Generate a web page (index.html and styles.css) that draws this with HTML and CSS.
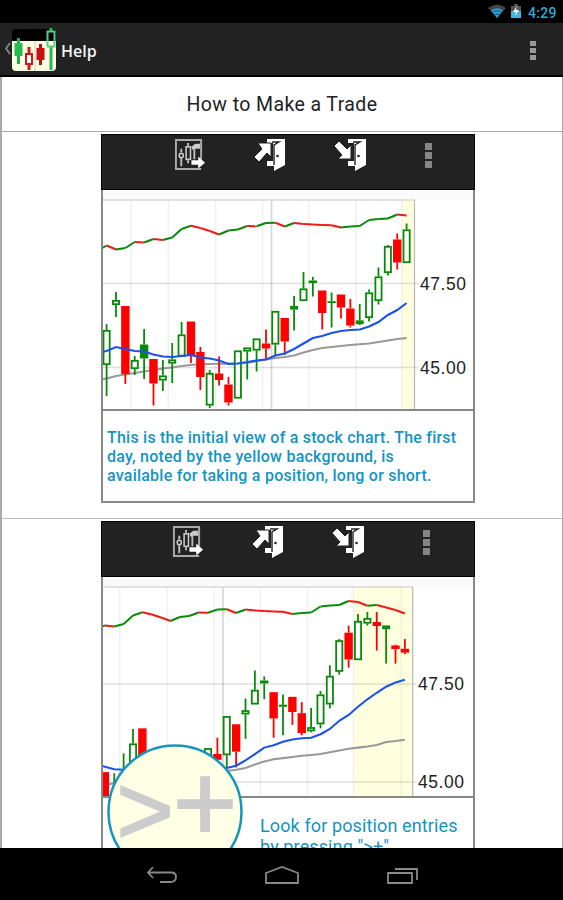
FILE: index.html
```html
<!DOCTYPE html>
<html lang="en">

<head>
    <meta charset="UTF-8">
    <meta name="viewport" content="width=device-width, initial-scale=1.0">
    <title>Help</title>
    <link rel="stylesheet" href="styles.css">
</head>

<body>
    <!-- shared icons -->
    <svg class="defs">
        <symbol id="icon-chart" viewBox="0 0 32 34">
            <path d="M28 22V2H2v30h26" fill="none" stroke="#aaa" stroke-width="2" />
            <path d="M7.500 11v4M7.500 20v9M14.500 5v3M14.500 23v3M21 11v11" stroke="#bbb" stroke-width="2" />
            <rect x="5.500" y="16" width="4" height="4" rx="1" fill="none" stroke="#ccc" stroke-width="1.600" />
            <rect x="12.500" y="9" width="4.500" height="13" fill="none" stroke="#ccc" stroke-width="1.600" />
            <path d="M18 9l4-3h5v5h-5l-3 1z" fill="#ccc" />
            <path d="M18 23h7v-4l7 6.500-7 6v-4h-7z" fill="#fff" />
        </symbol>
        <symbol id="icon-door" viewBox="0 0 20 34">
            <path d="M1 1h18v26L8 33V28H1v-5h6V5H1z" fill="#fff" />
            <path d="M6 4h7L8 7v20" fill="none" stroke="#222" stroke-width="1.400" />
            <circle cx="11.500" cy="18" r="1.300" fill="#222" />
        </symbol>
    </svg>

    <div class="status-bar">
        <svg class="wifi" width="20" height="16" viewBox="0 0 20 16">
            <path d="M1 4Q10-3 19 4L10 14z" fill="#444" />
            <path d="M4 6.500Q10 2 16 6.500L10 14z" fill="#2b9fc9" />
            <path d="M5 8.500Q10 5 15 8.500M7 11q3-2 6 0" fill="none" stroke="#126" stroke-width=".6" />
        </svg>
        <svg class="battery" width="10" height="16" viewBox="0 0 10 16">
            <path d="M3 1h4v2h3v12H0V3h3z" fill="#555" />
            <path d="M0 8h10v7H0z" fill="#45b5dd" />
            <path d="M6 3L2 9h3l-1 4 4-6H5z" fill="#fff" />
        </svg>
        <span class="time">4:29</span>
    </div>

    <div class="action-bar">
        <svg class="app-icon" width="53" height="46" viewBox="0 0 53 46">
            <path d="M6 16l-4 5.500L6 27" fill="none" stroke="#888" stroke-width="1.800" />
            <rect x="8" y="2" width="44" height="42" rx="4" fill="#000" />
            <path d="M8 14h44v26a4 4 0 0 1-4 4H12a4 4 0 0 1-4-4z" fill="#ffffe3" />
            <path d="M31 14v30" stroke="#ccc" />
            <path d="M14.500 11v26" stroke="#1bae48" stroke-width="3" />
            <rect x="10.500" y="16" width="8" height="13" fill="#22bd52" />
            <path d="M25 20v7M25 38v5" stroke="#cf1818" stroke-width="3" />
            <rect x="22" y="27" width="6" height="10" fill="#fff" stroke="#cf1818" stroke-width="2" />
            <path d="M36.500 17v21" stroke="#b81010" stroke-width="3" />
            <rect x="32.500" y="21" width="8" height="12" fill="#c81010" />
            <path d="M47 1v4M47 20v23" stroke="#25b856" stroke-width="3" />
            <rect x="43.500" y="4.500" width="7" height="15" fill="none" stroke="#54cf86" stroke-width="2" />
        </svg>
        <h1>Help</h1>
        <div class="overflow"><i></i><i></i><i></i></div>
    </div>

    <div class="list">
        <h2 class="list-title">How to Make a Trade</h2>

        <div class="list-row">
            <div class="card">
                <div class="toolbar">
                    <svg class="tool-chart" width="31" height="33"><use href="#icon-chart" /></svg>
                    <svg class="tool-door" width="34" height="34">
                        <use href="#icon-door" x="13" y="0" width="20" height="34" />
                        <path d="M5 5h13v14l-4-4-8 9-5-5 8-8z" fill="#fff" stroke="#222" />
                    </svg>
                    <svg class="tool-door" width="34" height="34">
                        <use href="#icon-door" x="13" y="0" width="20" height="34" />
                        <path d="M5 3l8 8 4-4v14H4l4-4-8-9z" fill="#fff" stroke="#222" />
                    </svg>
                    <div class="overflow small"><i></i><i></i><i></i></div>
                </div>
                <svg class="chart" id="chart1" width="370" height="219" viewBox="103 190 370 219"></svg>
                <p class="caption">This is the initial view of a stock chart. The first<br>day, noted by the yellow background, is<br>available for taking a position, long or short.</p>
            </div>
        </div>

        <div class="list-row">
            <div class="card second">
                <div class="toolbar">
                    <svg class="tool-chart" width="31" height="33"><use href="#icon-chart" /></svg>
                    <svg class="tool-door" width="34" height="34">
                        <use href="#icon-door" x="13" y="0" width="20" height="34" />
                        <path d="M5 5h13v14l-4-4-8 9-5-5 8-8z" fill="#fff" stroke="#222" />
                    </svg>
                    <svg class="tool-door" width="34" height="34">
                        <use href="#icon-door" x="13" y="0" width="20" height="34" />
                        <path d="M5 3l8 8 4-4v14H4l4-4-8-9z" fill="#fff" stroke="#222" />
                    </svg>
                    <div class="overflow small"><i></i><i></i><i></i></div>
                </div>
                <svg class="chart" id="chart2" width="370" height="219" viewBox="103 577 370 219"></svg>
                <p class="caption large">Look for position entries<br>by pressing "&gt;+"</p>
                <svg class="badge" width="136" height="136" viewBox="0 0 136 136">
                    <circle cx="68" cy="68" r="66.500" fill="#ffffe6" stroke="#1496bd" stroke-width="2.500" />
                    <text x="9.500" y="100" font-size="98">&gt;</text>
                    <text x="66" y="97" font-size="110">+</text>
                </svg>
            </div>
        </div>
    </div>

    <div class="nav-bar">
        <svg width="32" height="20" viewBox="0 0 32 20">
            <path d="M7 1L2 6.500 7 12M2 6.500h23q5 0 5 4.500t-5 5H14" />
        </svg>
        <svg width="36" height="20" viewBox="0 0 36 20">
            <path d="M2 17V7l16-6 16 6v10z" />
        </svg>
        <svg width="34" height="20" viewBox="0 0 34 20">
            <path d="M2 7h24v10H2zM9 3h22v11" />
        </svg>
    </div>

    <script>
        // type (h hollow, g green, r red), body top, body bottom, high, low
        const candles = [
            ['h', 330, 365, 324, 396], ['h', 300, 305, 292, 317], ['r', 306, 374, 306, 384],
            ['h', 360, 369, 356, 375], ['g', 344.5, 358.5, 329, 379], ['r', 359, 383.5, 359, 405.5],
            ['h', 375.5, 380.5, 360, 391], ['h', 359.5, 363.5, 343, 383], ['h', 334.5, 356.5, 322, 357],
            ['r', 321.5, 355, 321.5, 363], ['r', 352, 377, 347, 390], ['h', 373, 405.5, 370, 408],
            ['r', 373.5, 380, 356.5, 385.5], ['r', 384.5, 402.5, 377, 405.5], ['h', 350.5, 398.5, 350.5, 398.5],
            ['h', 347.5, 351.5, 347.5, 379.5], ['h', 338.5, 350.5, 338.5, 371.5], ['r', 343.5, 348.5, 329.5, 359],
            ['h', 311, 344.5, 311, 355], ['r', 318, 341.5, 318, 355], ['h', 306, 309.5, 296, 330.5],
            ['h', 288.5, 301, 272, 301], ['g', 280.5, 283, 277, 296.5], ['r', 290.5, 313, 290.5, 329.5],
            ['g', 301.2, 303, 292.5, 327.5], ['r', 294.5, 307.5, 294.5, 318.5], ['r', 308.5, 325.5, 299, 327.5],
            ['h', 320.5, 324, 304, 325], ['h', 292.5, 318, 289.5, 321.5], ['h', 276.5, 301, 267.5, 304.5],
            ['h', 246, 273, 245, 275.5], ['r', 239.5, 262.5, 233.5, 269.5], ['h', 229.5, 263, 223.5, 263],
            ['h', 227, 231.7, 221.8, 233.4], ['r', 230.4, 233.8, 221.8, 254.8], ['h', 233.4, 236.4, 233.4, 266],
            ['r', 250.5, 253.5, 249.7, 266], ['r', 253.3, 256.6, 245, 258]
        ];
        const trend = [245.5, 249.5, 248, 242, 242.5, 239, 240, 237.5, 229, 225.7, 228, 231, 234.5, 230.5, 229.5, 226, 226.3,
            223, 222.7, 226.5, 223, 224, 224.4, 225, 225.3, 227.5, 226.5, 226, 220, 219, 218.5, 214.5, 215.5, 219.2, 218.5, 221, 223.5, 227];
        const fast = [351, 347, 349, 351, 351.5, 354.5, 356.5, 357, 356, 355, 357.5, 358.5, 360.5, 364, 363.5, 362, 360.5,
            359.5, 355.5, 353.5, 349, 343.5, 338, 336, 333, 331, 330, 329.5, 326.5, 322, 315, 310, 303, 296.6, 291, 285.8, 282.2, 279.8];
        const slow = [378.5, 376, 374.5, 373, 371.5, 370, 368.5, 367.5, 366, 365, 364.3, 364, 363.7, 363.6, 363.5, 363, 361,
            359.5, 358, 357, 355.5, 352.5, 350, 348, 347, 346, 345, 344.3, 343.5, 342, 340.5, 339, 338, 337, 335.8, 333.2, 332.3, 331.2];

        function drawChart(id, o) {
            const px = i => 106.6 + i * 9.375 + o.dx;
            const py = y => o.mid + (y - 283.5) * o.scale;
            const line = (x1, y1, x2, y2, color, w, opacity = 1) =>
                `<line x1="${x1}" y1="${y1}" x2="${x2}" y2="${y2}" stroke="${color}" stroke-width="${w}" opacity="${opacity}"/>`;
            const path = (list, color) => '<polyline fill="none" stroke="' + color + '" stroke-width="2.1" points="' +
                [list[0] + 1.5].concat(list).slice(0, o.count + 1).map((y, i) => px(i - 1) + ',' + py(y)).join(' ') + '"/>';
            let s = `<rect x="103" y="${o.top - 9}" width="370" height="9" fill="#fafafa"/>`;
            s += `<rect x="${o.yellow}" y="${o.top}" width="${o.right - o.yellow}" height="230" fill="#ffffe0"/>`;

            // grid
            [130.7, 168.3, 215.7, 262.5, 309, 356, 402, 449.7].forEach(x => {
                if (x + o.dx < o.right) s += line(x + o.dx, o.top, x + o.dx, o.top + 230, '#000', 1.3, 0.06);
            });
            s += line(271.5 + o.dx, o.top, 271.5 + o.dx, o.top + 230, '#d8d8d8', 1.8);
            s += line(103, o.top, o.right, o.top, '#d8d8d8', 1.3);
            s += line(103, o.mid, o.right + 4, o.mid, '#000', 1.5, 0.12);
            s += line(103, o.mid + 84 * o.scale, o.right + 4, o.mid + 84 * o.scale, '#000', 1.5, 0.12);
            s += line(o.right, o.top, o.right, o.top + 230, '#bbb', 1.3);

            s += path(slow, '#999');
            candles.slice(0, o.count).forEach((c, i) => {
                const x = px(i), color = c[0] === 'r' ? '#f00' : '#088a08';
                const [top, bottom, high, low] = c.slice(1).map(py);
                s += line(x, high, x, top, color, 1.8) + line(x, bottom, x, low, color, 1.8);
                if (c[0] === 'h') {
                    s += `<rect x="${x - 3.1}" y="${top + 0.8}" width="6.2" height="${Math.max(bottom - top - 1.6, 1)}" fill="#fff" stroke="${color}" stroke-width="1.8"/>`;
                } else {
                    s += `<rect x="${x - 4.2}" y="${top}" width="8.4" height="${bottom - top}" fill="${color}"/>`;
                }
            });
            s += path(fast, '#1b52ea');

            // trend line, green when rising
            s += line(px(-1), o.trend + 251, px(0), o.trend + trend[0], '#088a08', 2);
            for (let i = 1; i < o.count; i++) {
                const up = trend[i] <= trend[i - 1];
                s += line(px(i - 1), o.trend + trend[i - 1], px(i), o.trend + trend[i], up ? '#088a08' : '#f01818', 2);
            }
            s += `<text x="${o.label}" y="${o.mid + 6}" textLength="46">47.50</text>`;
            s += `<text x="${o.label}" y="${o.mid + 84 * o.scale + 6}" textLength="46">45.00</text>`;
            document.getElementById(id).innerHTML = s;
        }

        drawChart('chart1', { dx: 0, mid: 283.5, scale: 1, top: 200, trend: 0, count: 33, yellow: 402, right: 414.5, label: 420 });
        drawChart('chart2', { dx: -48.6, mid: 684, scale: 1.167, top: 587, trend: 386.5, count: 38, yellow: 354, right: 412.7, label: 418 });
    </script>
</body>

</html>
```
FILE: styles.css
```css
* {
    box-sizing: border-box;
}

body {
    margin: 0;
    height: 900px;
    display: flex;
    flex-direction: column;
    overflow: hidden;
    background: #fff;
    font-family: Roboto, "Liberation Sans", sans-serif;
}

svg {
    display: block;
    flex: none;
}

.defs {
    position: absolute;
    width: 0;
    height: 0;
}

.status-bar {
    flex: none;
    height: 23px;
    padding: 3px 6px 0 0;
    background: #000;
    display: flex;
    justify-content: flex-end;
}

.wifi {
    margin: 1px 4px 0 0;
}

.battery {
    margin-right: 7px;
}

.time {
    width: 29px;
    color: #33a9d6;
    font-size: 14px;
    line-height: 20px;
    letter-spacing: 0.3px;
    font-weight: 500;
}

.action-bar {
    flex: none;
    height: 54px;
    padding: 0 27px 0 4px;
    background: #222;
    border-bottom: 2px solid #000;
    display: flex;
    align-items: center;
}

.app-icon {
    margin-top: 2px;
}

.action-bar h1 {
    flex: 1;
    margin: 3px 0 0 4px;
    color: #f3f3f3;
    font-family: "Open Sans", "Noto Sans", sans-serif;
    font-size: 16px;
    font-weight: 600;
}

.overflow {
    display: flex;
    flex-direction: column;
    gap: 2px;
    margin-top: 2px;
}

.overflow i {
    width: 6px;
    height: 5px;
    background: #999;
}

.overflow.small {
    margin: 5px 0 0 57px;
}

.overflow.small i {
    width: 7px;
    height: 7px;
    background: #858585;
}

.list {
    flex: 1;
    min-height: 0;
    overflow: hidden;
    border: solid #aaa;
    border-width: 0 1px 0 2px;
}

.list-title {
    height: 55px;
    margin: 0;
    border-bottom: 1px solid #aaa;
    color: #222;
    font-size: 19.5px;
    line-height: 55px;
    font-weight: 400;
    letter-spacing: 0.4px;
    text-align: center;
}

.list-row {
    height: 387px;
    padding: 2px 0 0 99px;
    border-bottom: 1px solid #bbb;
}

.card {
    position: relative;
    width: 374px;
    height: 369px;
    border: 2px solid #888;
    border-top: 0;
}

.toolbar {
    height: 56px;
    margin: 0 -2px;
    padding: 3px 0 0 72px;
    background: #222;
    border: 1px solid #000;
    display: flex;
    align-items: flex-start;
}

.tool-door {
    margin-left: 47px;
}

.tool-chart + .tool-door {
    margin-left: 48px;
}

.second .toolbar {
    padding-left: 70px;
}

.chart {
    font-family: "Liberation Sans", Arial, sans-serif;
    font-size: 17.5px;
    fill: #222;
}

.caption {
    height: 92px;
    margin: 0;
    padding: 17px 0 0 4px;
    border-top: 2px solid #888;
    color: #1593c2;
    font-size: 16px;
    line-height: 19px;
    font-weight: 500;
    letter-spacing: 0.23px;
    white-space: nowrap;
}

.caption.large {
    padding: 17px 0 0 157px;
    font-size: 18px;
    line-height: 21px;
    font-weight: 400;
    letter-spacing: 0.12px;
}

/* magnified button over the chart */
.badge {
    position: absolute;
    left: 4px;
    top: 223px;
    font-family: "Liberation Sans", Arial, sans-serif;
    fill: #ccc;
    stroke: #ccc;
    stroke-width: 2;
}

.nav-bar {
    flex: none;
    height: 52px;
    padding-left: 2px;
    background: #000;
    display: flex;
    justify-content: center;
    align-items: center;
    gap: 86px;
}

.nav-bar svg {
    margin-top: 3px;
}

.nav-bar path {
    fill: none;
    stroke: #888;
    stroke-width: 1.8;
}
```
